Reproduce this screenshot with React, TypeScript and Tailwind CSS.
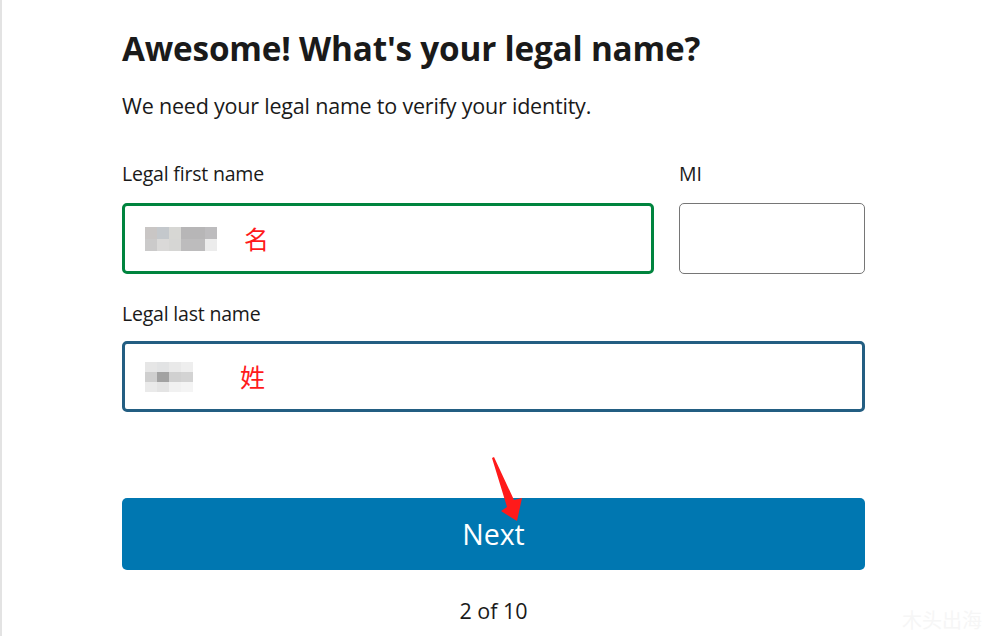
import React from "react";

function Blur({ variant }: { variant: 1 | 2 }) {
  const cells1 = [
    ["#c9c6c5", "#c4c8cc", "#d7d7d4", "#b7b6b7", "#b7b6b7", "#bdbcbe"],
    ["#cbcaca", "#dad9d8", "#d6d6d4", "#bdbcbd", "#bdbcbd", "#ececec"],
  ];
  const cells2 = [
    ["#e6e6e6", "#e2e3e4", "#e9e9e9", "#eeeeee"],
    ["#cfcfcf", "#a2a2a2", "#d0d0d0", "#d3d3d3"],
    ["#eaeaea", "#e4e4e4", "#f1f1f1", "#f4f4f4"],
  ];
  const cells = variant === 1 ? cells1 : cells2;
  return (
    <div className="flex flex-col">
      {cells.map((row, i) => (
        <div key={i} className="flex">
          {row.map((c, j) => (
            <div key={j} className={variant === 1 ? "w-[12px] h-[12px]" : "w-[12px] h-[10px]"} style={{ background: c }} />
          ))}
        </div>
      ))}
    </div>
  );
}

export default function App() {
  return (
    <div
      className="relative w-[986px] h-[636px] bg-white overflow-hidden border-l-2 border-[#e3e3e3] text-[#1a1a1a]"
      style={{ fontFamily: '"Open Sans", "Noto Sans CJK SC", sans-serif' }}
    >
      <div className="ml-[120px] w-[743px] pt-[24px]">
        <h1 className="text-[33.3px] font-bold leading-[48px] tracking-[-0.2px]">Awesome! What's your legal name?</h1>
        <p className="mt-[20px] text-[21.5px] leading-[28px] tracking-[-0.2px]">We need your legal name to verify your identity.</p>

        <div className="mt-[41px] flex gap-[25px]">
          <div className="flex-1 flex flex-col">
            <label className="text-[19.5px] leading-[26px] tracking-[-0.2px]">Legal first name</label>
            <div className="mt-[16px] h-[71px] rounded-[5px] border-[3px] border-[#00843e] flex items-center pl-[20px]">
              <Blur variant={1} />
              <span className="ml-[27px] text-[25px] text-[#ff1a1a]" style={{ fontFamily: '"Noto Sans CJK SC", sans-serif' }}>名</span>
            </div>
          </div>
          <div className="w-[186px] flex flex-col">
            <label className="text-[19.5px] leading-[26px]">MI</label>
            <div className="mt-[16px] h-[71px] rounded-[5px] border-[1.5px] border-[#767676]" />
          </div>
        </div>

        <div className="mt-[27px] flex flex-col">
          <label className="text-[19.5px] leading-[26px] tracking-[-0.2px]">Legal last name</label>
          <div className="mt-[14px] h-[71px] rounded-[5px] border-[3px] border-[#235e82] flex items-center pl-[20px]">
            <Blur variant={2} />
            <span className="ml-[47px] text-[25px] text-[#ff1a1a]" style={{ fontFamily: '"Noto Sans CJK SC", sans-serif' }}>姓</span>
          </div>
        </div>

        <button className="mt-[86px] w-full h-[72px] rounded-[5px] bg-[#0077b1] text-white text-[28.5px] flex items-center justify-center">
          Next
        </button>

        <p className="mt-[26px] text-center text-[21.5px] leading-[30px]">2 of 10</p>
      </div>

      <svg className="absolute left-[480px] top-[450px]" width="50" height="80" viewBox="0 0 50 80">
        <polygon points="10,8 12,7 32,50 40,48 35,71 19,61 25,57" fill="#ff1a1a" />
      </svg>

      <div
        className="absolute right-[4px] bottom-[1px] text-[20px] text-[#f6f6f6]"
        style={{ fontFamily: '"Noto Sans CJK SC", sans-serif' }}
      >
        木头出海
      </div>
    </div>
  );
}
